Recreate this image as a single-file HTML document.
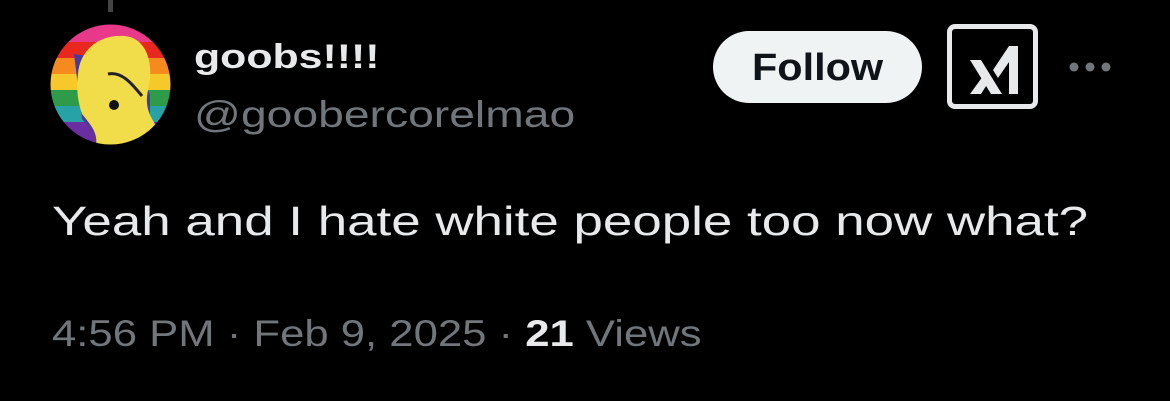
<!DOCTYPE html>
<html><head><style>
body{margin:0;width:1170px;height:401px;background:#000;overflow:hidden;font-family:"Liberation Sans",Arial,sans-serif;position:relative}
.a{position:absolute;transform-origin:0 0;white-space:nowrap}
</style></head><body>
<div class="a" style="left:108px;top:0;width:5px;height:12px;background:#444"></div>
<svg class="a" style="left:50px;top:24px" width="121" height="121" viewBox="0 0 121 121">
<defs><clipPath id="c"><circle cx="60.5" cy="60.5" r="60"/></clipPath></defs>
<g clip-path="url(#c)">
<rect y="0" width="121" height="20" fill="#e8388a"/>
<rect y="18" width="121" height="16" fill="#e8281e"/>
<rect y="34" width="121" height="16" fill="#f58a1f"/>
<rect y="50" width="121" height="16" fill="#f6c82a"/>
<rect y="66" width="121" height="16" fill="#2e9b48"/>
<rect y="82" width="121" height="16" fill="#27a3a8"/>
<rect y="98" width="121" height="23" fill="#6a2ea0"/>
<path d="M24 30 L32 95 L45 110 L100 118 L100 70 L85 40Z" fill="#4a3aa0"/>
<path d="M28 50 C30 25 50 10 75 12 C92 14 102 30 100 55 C98 70 92 80 105 100 L100 125 L45 125 C50 110 40 100 32 90 C28 78 26 65 28 50Z" fill="#f1dd4a"/>
<path d="M58 50 C72 47 82 60 92 72" stroke="#222" stroke-width="3" fill="none"/>
<circle cx="64" cy="81" r="5" fill="#111"/>
</g></svg>
<div class="a" style="left:194px;top:38px;color:#e7e9ea;font-weight:bold;font-size:34px;transform:scaleX(1.26)">goobs!!!!</div>
<div class="a" style="left:194px;top:94px;color:#71767b;font-size:37px;transform:scaleX(1.25)">@goobercorelmao</div>
<div class="a" style="left:713px;top:31px;width:209px;height:72px;border-radius:36px;background:#eff3f4"></div>
<div class="a" style="left:752px;top:47px;color:#0f1419;font-weight:bold;font-size:38px;transform:scaleX(1.09)">Follow</div>
<div class="a" style="left:947px;top:24px;width:81px;height:75px;border:5px solid #e7e9ea;border-radius:8px"></div>
<svg class="a" style="left:947px;top:24px" width="91" height="85" viewBox="0 0 91 85">
<path d="M23 36 L34 36 L55 70 L44 70Z" fill="#e7e9ea"/>
<path d="M23 70 L36 52 L41 59 L34 70Z" fill="#e7e9ea"/>
<path d="M62 22 L71 22 L71 70 L62 70Z" fill="#e7e9ea"/>
<path d="M46 46 L62 22 L62 38 L51 54Z" fill="#e7e9ea"/>
</svg>
<svg class="a" style="left:1064px;top:58px" width="50" height="18"><circle cx="10" cy="9" r="4.5" fill="#71767b"/><circle cx="26" cy="9" r="4.5" fill="#71767b"/><circle cx="42" cy="9" r="4.5" fill="#71767b"/></svg>
<div class="a" style="left:52px;top:198px;color:#e7e9ea;font-size:41px;transform:scaleX(1.29)">Yeah and I hate white people too now what?</div>
<div class="a" style="left:52px;top:313px;color:#71767b;font-size:37px;transform:scaleX(1.18)">4:56 PM · Feb 9, 2025 · <b style="color:#e7e9ea">21</b> Views</div>
</body></html>
